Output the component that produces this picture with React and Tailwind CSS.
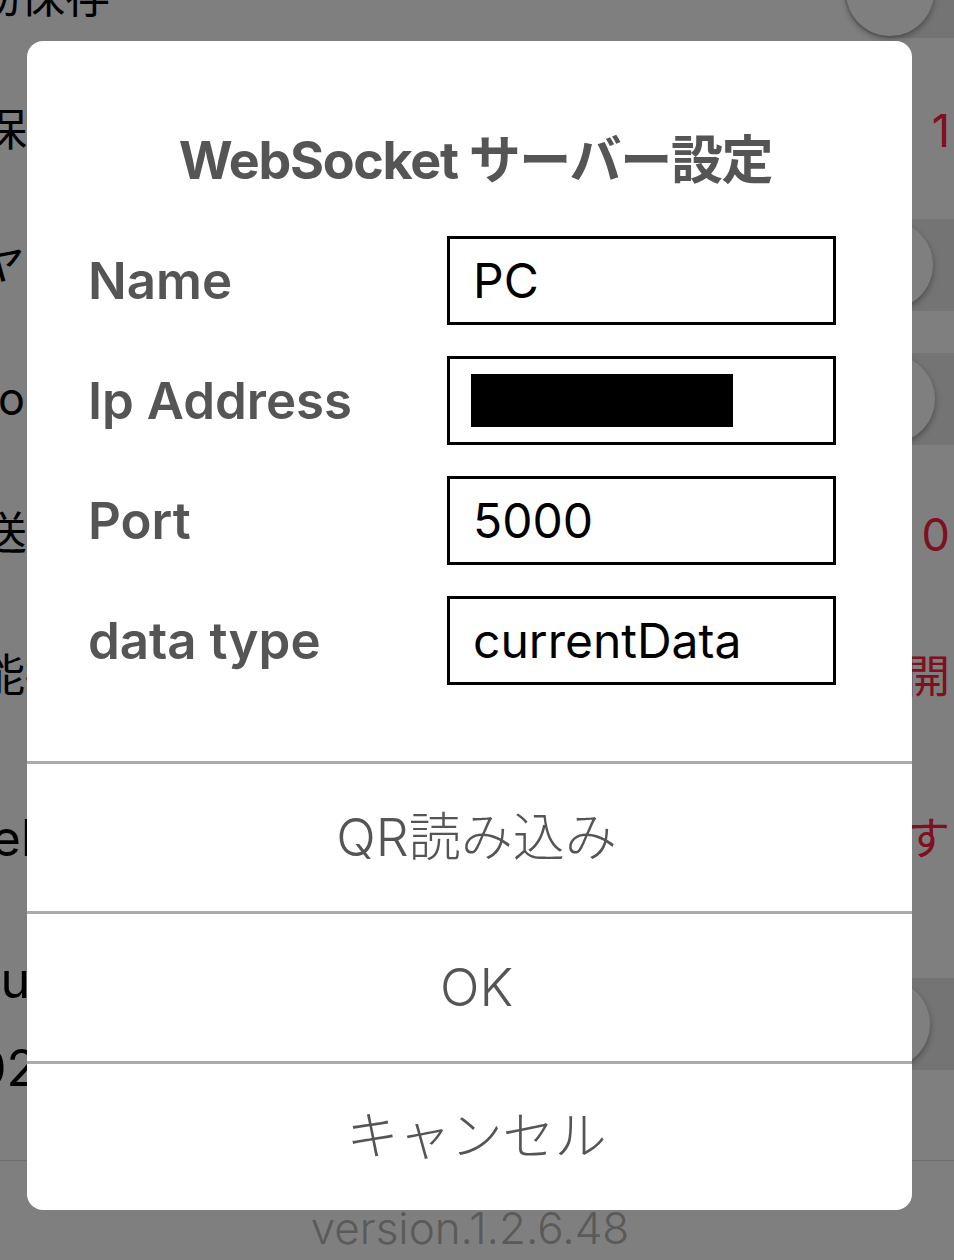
import React from 'react';

const jp = { fontFamily: 'Inter, "Noto Sans CJK JP", sans-serif' };

function Toggle() {
  return (
    <div className="relative w-[170px] h-[92px] rounded-full bg-[#e8e8e8] shrink-0">
      <div className="absolute left-[2px] top-[2px] w-[88px] h-[88px] rounded-full bg-white shadow-[0_3px_6px_rgba(0,0,0,0.35)]"></div>
    </div>
  );
}

function BgRow({ h, label, right, labelClass = '' }) {
  return (
    <div className={`flex items-center justify-between ${h} overflow-hidden`}>
      <div className={`text-black text-[45px] leading-tight whitespace-nowrap ${labelClass}`}>{label}</div>
      {right}
    </div>
  );
}

function Value({ children }) {
  return <div className="text-[#ff2040] text-[45px] leading-none pr-[4px] whitespace-nowrap">{children}</div>;
}

function Field({ label, children }) {
  return (
    <div className="flex items-center h-[89px]">
      <div className="w-[359px] text-[51px] font-semibold text-[#555555] leading-none">{label}</div>
      <div className="w-[389px] h-[89px] border-[3px] border-black flex items-center pl-[23px] text-[48px] text-black leading-none">
        {children}
      </div>
    </div>
  );
}

function ActionButton({ children, last }) {
  return (
    <button
      type="button"
      className={`w-full border-t-[3px] border-[#ababab] flex items-center justify-center pl-[14px] text-[52px] font-light text-[#555555] ${last ? 'h-[149px] rounded-b-[16px]' : 'h-[150px]'}`}
    >
      {children}
    </button>
  );
}

export default function App() {
  return (
    <div className="relative w-[954px] h-[1260px] overflow-hidden bg-white" style={jp}>
      {/* Settings page behind the dialog */}
      <div className="flex flex-col -mt-[60px]">
        <BgRow h="h-[123px]" labelClass="-ml-[25px] -mt-[8px]" label="動保存" right={<div className="-mr-[60px] mt-[-20px]"><Toggle /></div>} />
        <BgRow h="h-[135px]" labelClass="-ml-[18px]" label="保存間隔" right={<Value>1</Value>} />
        <BgRow h="h-[133px]" labelClass="-ml-[20px]" label="ヤード表示" right={<div className="-mr-[59px]"><Toggle /></div>} />
        <BgRow h="h-[136px]" labelClass="-ml-[2px]" label="ooo" right={<div className="-mr-[61px]"><Toggle /></div>} />
        <BgRow h="h-[135px]" labelClass="-ml-[18px]" label="送信間隔" right={<Value>0</Value>} />
        <BgRow h="h-[148px]" labelClass="-ml-[20px]" label="能拡張" right={<Value>開</Value>} />
        <BgRow h="h-[177px]" labelClass="-ml-[55px] text-[50px]" label="Web" right={<Value>す</Value>} />
        <div className="flex items-center justify-between h-[233px]">
          <div className="flex flex-col text-black text-[50px] leading-[88px] whitespace-nowrap -mt-[40px]">
            <span className="-ml-[36px]">Cur</span>
            <span className="-ml-[25px]">02</span>
          </div>
          <div className="-mr-[56px] -mt-[40px]"><Toggle /></div>
        </div>
        <div className="border-t border-[#dcdcdc] h-[100px] flex items-center justify-center pt-[34px]">
          <span className="text-[44px] font-light text-[#b4b4b4] -ml-[14px]">version.1.2.6.48</span>
        </div>
      </div>

      {/* Dim overlay */}
      <div className="absolute inset-0 bg-black/50"></div>

      {/* Dialog */}
      <div className="absolute left-[27px] top-[41px] w-[885px] h-[1169px] bg-white rounded-[16px] flex flex-col">
        <div className="pt-[89px] pl-[12px]">
          <h2 className="h-[62px] text-center text-[52px] font-bold text-[#555555] leading-[62px] tracking-tight">
            WebSocket サーバー設定
          </h2>
        </div>
        <div className="mt-[44px] pl-[61px] flex flex-col gap-[31px]">
          <Field label="Name">PC</Field>
          <Field label="Ip Address">
            <div className="w-[262px] h-[53px] bg-black -ml-[2px]"></div>
          </Field>
          <Field label="Port">5000</Field>
          <Field label="data type">currentData</Field>
        </div>
        <div className="mt-[76px] flex flex-col">
          <ActionButton>QR読み込み</ActionButton>
          <ActionButton>OK</ActionButton>
          <ActionButton last>キャンセル</ActionButton>
        </div>
      </div>
    </div>
  );
}
